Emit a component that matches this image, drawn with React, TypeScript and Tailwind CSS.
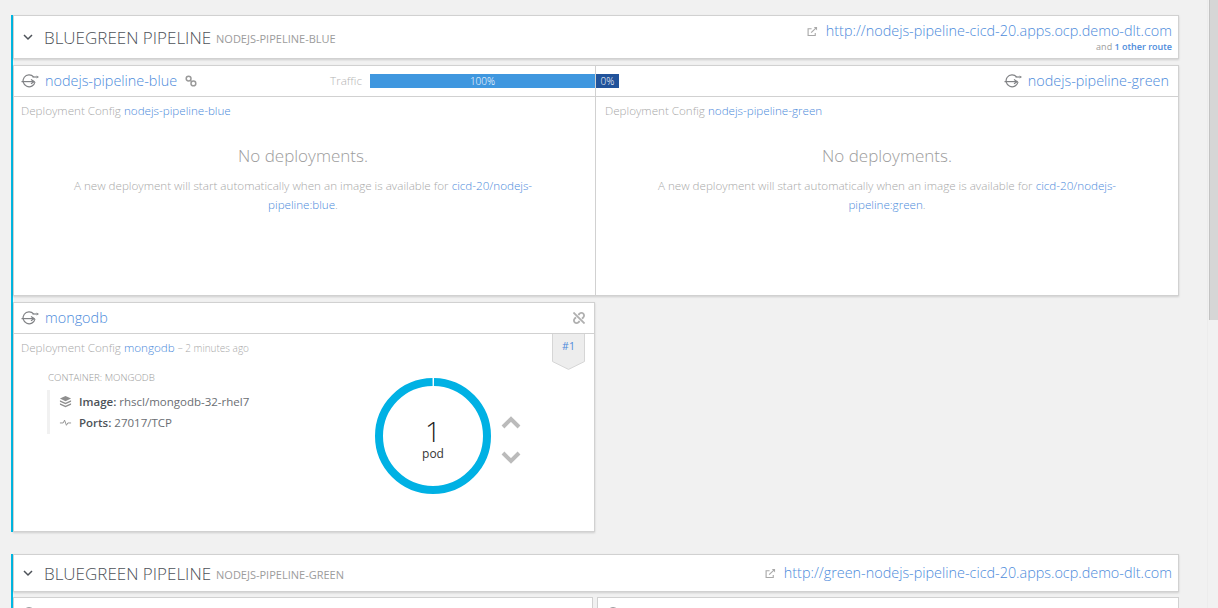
import { FaUnlink } from "react-icons/fa";

const BLUE_LINK = "text-[#4d8bdb]";

function ServiceIcon() {
  return (
    <svg viewBox="0 0 20 16" className="h-4 w-5 shrink-0 text-[#808285]" fill="none" stroke="currentColor" strokeWidth="1.2">
      <path d="M12.6 3.8A6 6 0 1 0 14 9" />
      <path d="M0.5 8.6H13" />
      <path d="M10 6.4 13.2 8.6 10 10.8" />
      <path d="M11.5 4H15.5" />
      <path d="M15.5 2.4 18 4 15.5 5.6Z" fill="currentColor" stroke="none" />
    </svg>
  );
}

function LinkIcon() {
  return (
    <svg viewBox="0 0 12 12" className="h-3 w-3 text-[#9a9a9a]" fill="none" stroke="currentColor" strokeWidth="1.5">
      <circle cx="3.6" cy="3.6" r="2.4" />
      <circle cx="8.4" cy="8.4" r="2.4" />
      <path d="M5 5 7 7" />
    </svg>
  );
}

function ExternalIcon() {
  return (
    <svg viewBox="0 0 12 12" className="h-[11px] w-[11px] text-[#a8a8a8]" fill="none" stroke="currentColor" strokeWidth="1.2">
      <path d="M9 7.5V10.4H1.2V3H5" />
      <path d="M4.5 7.2 10 2" />
      <path d="M7.4 1.2H11V4.8Z" fill="currentColor" stroke="none" />
    </svg>
  );
}

function Chevron({ up = false }: { up?: boolean }) {
  return (
    <svg viewBox="0 0 20 14" className="h-[14px] w-5 text-[#bbbbbb]" fill="none" stroke="currentColor" strokeWidth="4">
      <path d={up ? "M2 12 10 4 18 12" : "M2 2 10 10 18 2"} />
    </svg>
  );
}

function GroupHeader({ name, url, extra }: { name: string; url: string; extra?: boolean }) {
  return (
    <div className={`flex items-center border border-[#d1d1d1] bg-white pl-[9px] pr-[6px] shadow-[0_1px_2px_rgba(0,0,0,0.15)] ${extra ? "h-[44px]" : "h-[38px]"}`}>
      <svg viewBox="0 0 10 7" className="mr-[11px] h-[7px] w-[10px] text-[#4d5258]" fill="none" stroke="currentColor" strokeWidth="1.5">
        <path d="M1 1 5 5 9 1" />
      </svg>
      <span className="mt-[1px] text-[17px] text-[#4d5258]">BLUEGREEN PIPELINE</span>
      <span className="ml-[5px] mt-[4px] text-[11px] font-normal text-[#9c9c9c]">{name}</span>
      <div className="ml-auto flex flex-col items-end">
        <div className="flex items-center gap-[8px]">
          <ExternalIcon />
          <span className={`text-[14.4px] leading-[20px] ${BLUE_LINK}`}>{url}</span>
        </div>
        {extra && (
          <span className="text-[9px] font-normal leading-[12px] text-[#9c9c9c]">
            and <span className="font-semibold text-[#4d8bdb]">1 other route</span>
          </span>
        )}
      </div>
    </div>
  );
}

function EmptyDeployment({ name, tag, pad, nudge }: { name: string; tag: string; pad: string; nudge: string }) {
  return (
    <div className="pt-[4px]">
      <div className={`text-[11.65px] leading-[20px] text-[#a9a9a9] ${pad}`}>
        Deployment Config <span className={BLUE_LINK}>{name}</span>
      </div>
      <div className={`pt-[23px] text-center ${nudge}`}>
        <div className="text-[17px] leading-[23px] text-[#9c9c9c]">No deployments.</div>
        <p className="mx-auto mt-[9px] w-[480px] text-[11.65px] leading-[19px] text-[#a9a9a9]">
          A new deployment will start automatically when an image is available for{" "}
          <span className={BLUE_LINK}>cicd-20/nodejs-pipeline:{tag}</span>.
        </p>
      </div>
    </div>
  );
}

export default function App() {
  return (
    <div className="flex h-[608px] w-[1218px] overflow-hidden bg-[#f1f1f1] font-['Open_Sans',sans-serif] font-light">
      <main className="w-[1207px] pl-[11px] pr-[28px] pt-[15px]">
        <section className="flex flex-col gap-[6px] border-l-2 border-[#00b9e4]">
          <GroupHeader name="NODEJS-PIPELINE-BLUE" url="http://nodejs-pipeline-cicd-20.apps.ocp.demo-dlt.com" extra />

          <div className="grid h-[231px] grid-cols-[582px_1fr] border border-[#d1d1d1] bg-white shadow-[0_1px_2px_rgba(0,0,0,0.15)]">
            <div className="flex h-[31px] items-center border-r border-b border-[#d1d1d1] pl-[7px]">
              <ServiceIcon />
              <span className={`ml-[4px] text-[14.4px] ${BLUE_LINK}`}>nodejs-pipeline-blue</span>
              <span className="ml-[8px]">
                <LinkIcon />
              </span>
              <span className="ml-auto text-[11.65px] text-[#b4b4b4]">Traffic</span>
              <div className="ml-[8px] h-[14px] w-[225px] bg-[#3f97df] text-center text-[10px] leading-[14px] text-white">100%</div>
            </div>
            <div className="flex h-[31px] items-center border-b border-[#d1d1d1] pr-[9px]">
              <div className="h-[14px] w-[23px] bg-[#21539b] text-center text-[10px] leading-[14px] text-white">0%</div>
              <div className="ml-auto flex items-center gap-[4px]">
                <ServiceIcon />
                <span className={`text-[14.4px] ${BLUE_LINK}`}>nodejs-pipeline-green</span>
              </div>
            </div>
            <div className="h-[198px] border-r border-[#d1d1d1]">
              <EmptyDeployment name="nodejs-pipeline-blue" tag="blue" pad="pl-[7px]" nudge="pr-[3px]" />
            </div>
            <div className="h-[198px]">
              <EmptyDeployment name="nodejs-pipeline-green" tag="green" pad="pl-[9px]" nudge="pr-0" />
            </div>
          </div>

          <div className="relative h-[230px] w-[582px] border border-[#d1d1d1] bg-white shadow-[0_1px_2px_rgba(0,0,0,0.15)]">
            <div className="flex h-[31px] items-center border-b border-[#d1d1d1] pl-[7px] pr-[9px]">
              <ServiceIcon />
              <span className={`ml-[4px] text-[14.4px] ${BLUE_LINK}`}>mongodb</span>
              <FaUnlink className="ml-auto h-3 w-3 text-[#b0b0b0]" />
            </div>
            <div className="absolute right-[9px] top-[31px] h-[36px] w-[33px]">
              <svg viewBox="0 0 33 36" className="absolute inset-0" fill="#ededed" stroke="#d6d6d6" strokeWidth="1">
                <path d="M0.5 0V27.5L16.5 35.4 32.5 27.5V0" />
              </svg>
              <div className="relative pt-[5px] text-center text-[10.5px] font-normal text-[#4d8bdb]">#1</div>
            </div>
            <div className="px-[7px] pt-[6px]">
              <div className="text-[11.65px] leading-[16px] text-[#a9a9a9]">
                Deployment Config <span className={BLUE_LINK}>mongodb</span> <span className="text-[10px]">– 2 minutes ago</span>
              </div>
              <div className="flex">
                <div className="ml-[26px] w-[327px] pt-[15px]">
                  <div className="pl-px text-[9.7px] leading-[14px] text-[#999999]">CONTAINER: MONGODB</div>
                  <div className="mt-[5px] flex h-[44px] flex-col justify-center gap-[4px] border-l-[3px] border-[#f1f1f1] pl-[9px] text-[11.5px] font-normal text-[#6a6e73]">
                    <div className="flex items-center gap-[7px]">
                      <svg viewBox="0 0 14 14" className="h-[13px] w-[13px] text-[#8f8f8f]" fill="currentColor">
                        <path d="M7 1 13 3.8 7 6.6 1 3.8Z" />
                        <path d="M1 5.7 7 8.4 13 5.7V7.2L7 9.9 1 7.2Z" />
                        <path d="M1 8.9 7 11.6 13 8.9V10.4L7 13.1 1 10.4Z" />
                      </svg>
                      <span>
                        <span className="font-semibold text-[#4d5258]">Image:</span> rhscl/mongodb-32-rhel7
                      </span>
                    </div>
                    <div className="flex items-center gap-[7px]">
                      <svg viewBox="0 0 14 14" className="h-[13px] w-[13px] text-[#8f8f8f]" fill="none" stroke="currentColor" strokeWidth="1">
                        <path d="M1 7.5H4.5L6 4.5 8 10 9.5 7.5H13" />
                      </svg>
                      <span>
                        <span className="font-semibold text-[#4d5258]">Ports:</span> 27017/TCP
                      </span>
                    </div>
                  </div>
                </div>
                <div className="mt-[22px] flex items-center self-start">
                  <div className="relative ml-[1px] flex h-[116px] w-[116px] flex-col items-center justify-center pt-[7px]">
                    <svg viewBox="0 0 116 116" className="absolute inset-0" fill="none" stroke="#00b1e4" strokeWidth="8">
                      <circle cx="58" cy="58" r="54" strokeDasharray="337.3 2" strokeDashoffset="-1" transform="rotate(-90 58 58)" />
                    </svg>
                    <span className="text-[28px] leading-[29px] text-[#222222]">1</span>
                    <span className="text-[12px] font-normal leading-[16px] text-[#363636]">pod</span>
                  </div>
                  <div className="ml-[10px] mt-[8px] flex flex-col gap-[22px]">
                    <Chevron up />
                    <Chevron />
                  </div>
                </div>
              </div>
            </div>
          </div>
        </section>

        <section className="mt-[22px] flex flex-col gap-[5px] border-l-2 border-[#00b9e4]">
          <GroupHeader name="NODEJS-PIPELINE-GREEN" url="http://green-nodejs-pipeline-cicd-20.apps.ocp.demo-dlt.com" />
          <div className="flex gap-[4px]">
            <div className="h-[60px] w-[580px] border border-[#d1d1d1] bg-white px-[7px] pt-[5px]">
              <div className="flex items-center gap-[4px]">
                <ServiceIcon />
                <span className={`text-[14.4px] ${BLUE_LINK}`}>nodejs-pipeline-green</span>
              </div>
            </div>
            <div className="h-[60px] flex-1 border border-[#d1d1d1] bg-white px-[7px] pt-[5px]">
              <div className="flex items-center gap-[4px]">
                <ServiceIcon />
                <span className={`text-[14.4px] ${BLUE_LINK}`}>mongodb</span>
              </div>
            </div>
          </div>
        </section>
      </main>
      <aside className="flex w-[11px] flex-col border-l border-[#ececec] bg-[#f1f1f1] pl-px">
        <div className="h-[320px] border-l border-[#c4c4c4] bg-[#d6d6d6]" />
      </aside>
    </div>
  );
}
